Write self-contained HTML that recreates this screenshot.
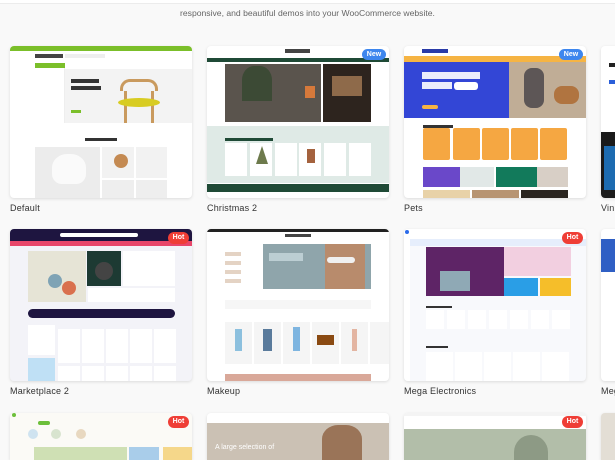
<!DOCTYPE html>
<html><head><meta charset="utf-8"><style>
*{margin:0;padding:0;box-sizing:border-box}
html,body{width:615px;height:460px;overflow:hidden}
body{background:#f9f9f9;font-family:"Liberation Sans",sans-serif;position:relative}
.top{position:absolute;left:0;top:0;width:615px;height:4px;background:#fff;border-bottom:1px solid #ececec}
.sub{position:absolute;top:8px;left:0;width:615px;text-align:center;font-size:8.6px;color:#666}
.card{position:absolute;width:182px;height:152px;background:#fff;border-radius:4px;overflow:hidden;box-shadow:0 1px 3px rgba(0,0,0,.12)}
.card.r3{height:47px;border-radius:4px 4px 0 0}
.card div{position:absolute}
.lbl{position:absolute;font-size:9px;color:#333;letter-spacing:.2px}
.new{right:3px;top:3px;width:24px;height:11px;border-radius:6px;background:#3d86ee;color:#fff;font-size:7px;text-align:center;line-height:11px;font-weight:bold}
.hot{right:3px;top:3px;width:21px;height:12px;border-radius:6px;background:#ef3e36;color:#fff;font-size:7px;text-align:center;line-height:12px;font-weight:bold}
</style></head><body>
<div class="top"></div>
<div class="sub">responsive, and beautiful demos into your WooCommerce website.</div>

<div class="card" style="left:10px;top:46px">
 <div style="left:0;top:0;width:182px;height:5px;background:#7bbf2a"></div>
 <div style="left:25px;top:8px;width:28px;height:4px;background:#444"></div>
 <div style="left:55px;top:8px;width:40px;height:4px;background:#eee"></div>
 <div style="left:25px;top:17px;width:30px;height:5px;background:#7bbf2a"></div>
 <div style="left:25px;top:22px;width:30px;height:55px;background:#fff;border-right:1px solid #eee"></div>
 <div style="left:55px;top:23px;width:127px;height:54px;background:#f3f3f3"></div>
 <div style="left:61px;top:33px;width:28px;height:4px;background:#333"></div>
 <div style="left:61px;top:40px;width:30px;height:4px;background:#333"></div>
 <div style="left:61px;top:64px;width:10px;height:3px;background:#7bbf2a"></div>
 <div style="left:110px;top:33px;width:38px;height:12px;border:3px solid #c99a5e;border-bottom:none;border-radius:10px 10px 0 0"></div>
 <div style="left:114px;top:45px;width:3px;height:32px;background:#c99a5e"></div>
 <div style="left:141px;top:45px;width:3px;height:32px;background:#c99a5e"></div>
 <div style="left:108px;top:52px;width:42px;height:9px;border-radius:50%;background:#d8cc22"></div>
 <div style="left:75px;top:92px;width:32px;height:3px;background:#333"></div>
 <div style="left:25px;top:101px;width:65px;height:51px;background:#ececec"></div>
 <div style="left:42px;top:108px;width:34px;height:30px;border-radius:45% 45% 10px 10px;background:#fafafa"></div>
 <div style="left:92px;top:101px;width:32px;height:31px;background:#f2f2f2"></div>
 <div style="left:104px;top:108px;width:14px;height:14px;border-radius:50%;background:#c48a52"></div>
 <div style="left:126px;top:101px;width:31px;height:31px;background:#f2f2f2"></div>
 <div style="left:92px;top:134px;width:32px;height:18px;background:#eee"></div>
 <div style="left:126px;top:134px;width:31px;height:18px;background:#eee"></div>
</div>
<div class="lbl" style="left:10px;top:203px">Default</div>

<div class="card" style="left:207px;top:46px">
 <div style="left:78px;top:3px;width:25px;height:4px;background:#444"></div>
 <div style="left:0;top:12px;width:182px;height:4px;background:#1f4a36"></div>
 <div style="left:18px;top:18px;width:96px;height:58px;background:#5a544d"></div>
 <div style="left:35px;top:20px;width:30px;height:35px;background:#3c4a35;border-radius:40% 40% 0 0"></div>
 <div style="left:98px;top:40px;width:10px;height:12px;background:#d6793b"></div>
 <div style="left:116px;top:18px;width:48px;height:58px;background:#2d241e"></div>
 <div style="left:125px;top:30px;width:30px;height:20px;background:#8e6a4a"></div>
 <div style="left:0;top:80px;width:182px;height:57px;background:#dfeae6"></div>
 <div style="left:18px;top:92px;width:48px;height:3px;background:#1f4a36"></div>
 <div style="left:18px;top:97px;width:22px;height:33px;background:#fff"></div>
 <div style="left:43px;top:97px;width:22px;height:33px;background:#fff"></div>
 <div style="left:68px;top:97px;width:22px;height:33px;background:#fff"></div>
 <div style="left:92px;top:97px;width:22px;height:33px;background:#fff"></div>
 <div style="left:117px;top:97px;width:22px;height:33px;background:#fff"></div>
 <div style="left:142px;top:97px;width:22px;height:33px;background:#fff"></div>
 <div style="left:49px;top:100px;width:12px;height:18px;background:#6d7a4c;clip-path:polygon(50% 0,100% 100%,0 100%)"></div>
 <div style="left:100px;top:103px;width:8px;height:14px;background:#a4623e"></div>
 <div style="left:0;top:138px;width:182px;height:8px;background:#1f4a36"></div>
 <div class="new">New</div>
</div>
<div class="lbl" style="left:207px;top:203px">Christmas 2</div>

<div class="card" style="left:404px;top:46px">
 <div style="left:18px;top:3px;width:26px;height:4px;background:#2a3ba8"></div>
 <div style="left:0;top:10px;width:182px;height:6px;background:#f6b443"></div>
 <div style="left:0;top:16px;width:105px;height:56px;background:#3346d6"></div>
 <div style="left:18px;top:26px;width:58px;height:7px;background:#fff;opacity:.9"></div>
 <div style="left:18px;top:36px;width:30px;height:7px;background:#fff;opacity:.9"></div>
 <div style="left:50px;top:36px;width:24px;height:8px;border-radius:3px;background:#fff"></div>
 <div style="left:18px;top:59px;width:16px;height:4px;border-radius:2px;background:#f6b443"></div>
 <div style="left:105px;top:16px;width:77px;height:56px;background:#c0ad96"></div>
 <div style="left:120px;top:22px;width:20px;height:40px;background:#5d5656;border-radius:8px"></div>
 <div style="left:150px;top:40px;width:25px;height:18px;background:#b07440;border-radius:8px"></div>
 <div style="left:19px;top:79px;width:30px;height:3px;background:#333"></div>
 <div style="left:19px;top:82px;width:27px;height:32px;background:#f5a742;border-radius:2px"></div>
 <div style="left:49px;top:82px;width:27px;height:32px;background:#f5a742;border-radius:2px"></div>
 <div style="left:78px;top:82px;width:27px;height:32px;background:#f5a742;border-radius:2px"></div>
 <div style="left:107px;top:82px;width:27px;height:32px;background:#f5a742;border-radius:2px"></div>
 <div style="left:136px;top:82px;width:27px;height:32px;background:#f5a742;border-radius:2px"></div>
 <div style="left:19px;top:121px;width:37px;height:20px;background:#6a48c9"></div>
 <div style="left:56px;top:121px;width:34px;height:20px;background:#e1e8e7"></div>
 <div style="left:92px;top:121px;width:41px;height:20px;background:#127a5b"></div>
 <div style="left:133px;top:121px;width:31px;height:20px;background:#d8cfc6"></div>
 <div style="left:19px;top:144px;width:47px;height:8px;background:#e8d2a8"></div>
 <div style="left:68px;top:144px;width:47px;height:8px;background:#b79472"></div>
 <div style="left:117px;top:144px;width:47px;height:8px;background:#2a2520"></div>
 <div class="new">New</div>
</div>
<div class="lbl" style="left:404px;top:203px">Pets</div>

<div class="card" style="left:601px;top:46px">
 <div style="left:8px;top:17px;width:10px;height:4px;background:#222"></div>
 <div style="left:8px;top:34px;width:10px;height:4px;background:#2b5fd9"></div>
 <div style="left:0;top:86px;width:182px;height:66px;background:#1a1a1a"></div>
 <div style="left:3px;top:100px;width:182px;height:44px;background:#1d6bb0"></div>
</div>
<div class="lbl" style="left:601px;top:203px">Vin</div>

<div class="card" style="left:10px;top:229px;background:#f3f3f8">
 <div style="left:0;top:0;width:182px;height:12px;background:#1e1540"></div>
 <div style="left:50px;top:4px;width:78px;height:4px;background:#fff;border-radius:2px"></div>
 <div style="left:0;top:12px;width:182px;height:5px;background:#e8466a"></div>
 <div style="left:18px;top:22px;width:58px;height:51px;background:#e6e4d6"></div>
 <div style="left:38px;top:45px;width:14px;height:14px;border-radius:50%;background:#7fa3b5"></div>
 <div style="left:52px;top:52px;width:14px;height:14px;border-radius:50%;background:#d9704e"></div>
 <div style="left:77px;top:22px;width:34px;height:35px;background:#1d3a33"></div>
 <div style="left:85px;top:33px;width:18px;height:18px;border-radius:50%;background:#444"></div>
 <div style="left:113px;top:22px;width:52px;height:35px;background:#fff"></div>
 <div style="left:78px;top:59px;width:87px;height:14px;background:#fff"></div>
 <div style="left:18px;top:80px;width:147px;height:9px;background:#1e1540;border-radius:5px"></div>
 <div style="left:18px;top:96px;width:27px;height:30px;background:#fff"></div>
 <div style="left:18px;top:129px;width:27px;height:23px;background:#bfe0f5"></div>
 <div style="left:48px;top:100px;width:22px;height:34px;background:#fff"></div>
 <div style="left:72px;top:100px;width:22px;height:34px;background:#fff"></div>
 <div style="left:96px;top:100px;width:22px;height:34px;background:#fff"></div>
 <div style="left:120px;top:100px;width:22px;height:34px;background:#fff"></div>
 <div style="left:144px;top:100px;width:22px;height:34px;background:#fff"></div>
 <div style="left:48px;top:137px;width:22px;height:15px;background:#fff"></div>
 <div style="left:72px;top:137px;width:22px;height:15px;background:#fff"></div>
 <div style="left:96px;top:137px;width:22px;height:15px;background:#fff"></div>
 <div style="left:120px;top:137px;width:22px;height:15px;background:#fff"></div>
 <div style="left:144px;top:137px;width:22px;height:15px;background:#fff"></div>
 <div class="hot">Hot</div>
</div>
<div class="lbl" style="left:10px;top:386px">Marketplace 2</div>

<div class="card" style="left:207px;top:229px">
 <div style="left:0;top:0;width:182px;height:3px;background:#222"></div>
 <div style="left:78px;top:5px;width:26px;height:3px;background:#444"></div>
 <div style="left:18px;top:18px;width:16px;height:40px;background:repeating-linear-gradient(#fff 0 5px,#e4d3c4 5px 9px)"></div>
 <div style="left:56px;top:15px;width:108px;height:45px;background:#8fa5ab"></div>
 <div style="left:118px;top:15px;width:40px;height:45px;background:#b88b6c"></div>
 <div style="left:120px;top:28px;width:28px;height:6px;background:#f0f0f0;border-radius:3px"></div>
 <div style="left:62px;top:24px;width:34px;height:8px;background:#cfe0e4;opacity:.7"></div>
 <div style="left:18px;top:71px;width:146px;height:9px;background:#f6f6f6"></div>
 <div style="left:18px;top:93px;width:27px;height:42px;background:#f5f5f5"></div>
 <div style="left:47px;top:93px;width:27px;height:42px;background:#f5f5f5"></div>
 <div style="left:76px;top:93px;width:27px;height:42px;background:#f5f5f5"></div>
 <div style="left:105px;top:93px;width:27px;height:42px;background:#f5f5f5"></div>
 <div style="left:134px;top:93px;width:27px;height:42px;background:#f5f5f5"></div>
 <div style="left:163px;top:93px;width:19px;height:42px;background:#f5f5f5"></div>
 <div style="left:28px;top:100px;width:7px;height:22px;background:#8cc0de"></div>
 <div style="left:56px;top:100px;width:9px;height:22px;background:#5a7b9c"></div>
 <div style="left:86px;top:98px;width:7px;height:24px;background:#7eb5e0"></div>
 <div style="left:110px;top:106px;width:17px;height:10px;background:#8a4a12"></div>
 <div style="left:145px;top:100px;width:5px;height:22px;background:#e3b5a2"></div>
 <div style="left:18px;top:145px;width:146px;height:7px;background:#d9a899"></div>
</div>
<div class="lbl" style="left:207px;top:386px">Makeup</div>

<div class="card" style="left:404px;top:229px;background:#f8f9fc">
 <div style="left:0;top:0;width:182px;height:10px;background:#fff"></div>
 <div style="left:0;top:0;width:6px;height:152px;background:#fff"></div>
 <div style="left:1px;top:1px;width:4px;height:4px;border-radius:50%;background:#2b6bea"></div>
 <div style="left:6px;top:10px;width:176px;height:7px;background:#e6eefc"></div>
 <div style="left:22px;top:18px;width:78px;height:49px;background:#5e2466"></div>
 <div style="left:36px;top:42px;width:30px;height:20px;background:#8fa9b5"></div>
 <div style="left:100px;top:18px;width:67px;height:29px;background:#f2cfe0"></div>
 <div style="left:100px;top:49px;width:34px;height:18px;background:#2a9ee6"></div>
 <div style="left:136px;top:49px;width:31px;height:18px;background:#f5be2a"></div>
 <div style="left:22px;top:77px;width:26px;height:2px;background:#333"></div>
 <div style="left:22px;top:81px;width:18px;height:19px;background:#fff"></div>
 <div style="left:43px;top:81px;width:18px;height:19px;background:#fff"></div>
 <div style="left:64px;top:81px;width:18px;height:19px;background:#fff"></div>
 <div style="left:85px;top:81px;width:18px;height:19px;background:#fff"></div>
 <div style="left:106px;top:81px;width:18px;height:19px;background:#fff"></div>
 <div style="left:127px;top:81px;width:18px;height:19px;background:#fff"></div>
 <div style="left:148px;top:81px;width:18px;height:19px;background:#fff"></div>
 <div style="left:22px;top:117px;width:22px;height:2px;background:#333"></div>
 <div style="left:22px;top:123px;width:27px;height:29px;background:#fff"></div>
 <div style="left:51px;top:123px;width:27px;height:29px;background:#fff"></div>
 <div style="left:80px;top:123px;width:27px;height:29px;background:#fff"></div>
 <div style="left:109px;top:123px;width:27px;height:29px;background:#fff"></div>
 <div style="left:138px;top:123px;width:27px;height:29px;background:#fff"></div>
 <div class="hot">Hot</div>
</div>
<div class="lbl" style="left:404px;top:386px">Mega Electronics</div>

<div class="card" style="left:601px;top:229px">
 <div style="left:0;top:10px;width:182px;height:33px;background:#2f5fc4"></div>
</div>
<div class="lbl" style="left:601px;top:386px">Meg</div>

<div class="card r3" style="left:10px;top:413px;background:#fbfaf6">
 <div style="left:2px;top:0;width:4px;height:4px;border-radius:50%;background:#6cbf3a"></div>
 <div style="left:28px;top:8px;width:12px;height:4px;border-radius:2px;background:#6cbf3a"></div>
 <div style="left:18px;top:16px;width:10px;height:10px;border-radius:50%;background:#cfe3f0"></div>
 <div style="left:41px;top:16px;width:10px;height:10px;border-radius:50%;background:#d8e4cf"></div>
 <div style="left:66px;top:16px;width:10px;height:10px;border-radius:50%;background:#e8d8c0"></div>
 <div style="left:24px;top:34px;width:93px;height:13px;background:#cfe0b4"></div>
 <div style="left:119px;top:34px;width:30px;height:13px;background:#a9cdea"></div>
 <div style="left:153px;top:34px;width:29px;height:13px;background:#f5d78a"></div>
 <div class="hot">Hot</div>
</div>
<div class="card r3" style="left:207px;top:413px">
 <div style="left:0;top:10px;width:182px;height:37px;background:#cbc1b4"></div>
 <div style="left:115px;top:12px;width:40px;height:35px;background:#9a7458;border-radius:40% 40% 0 0"></div>
 <div style="left:8px;top:31px;font-size:7px;color:#fff">A large selection of</div>
</div>
<div class="card r3" style="left:404px;top:413px">
 <div style="left:0;top:0;width:182px;height:3px;background:#f4f4f4"></div>
 <div style="left:0;top:16px;width:182px;height:31px;background:#b2bea9"></div>
 <div style="left:110px;top:22px;width:34px;height:25px;border-radius:17px 17px 0 0;background:#8d9a85"></div>
 <div class="hot">Hot</div>
</div>
<div class="card r3" style="left:601px;top:413px;background:#e3ded5"></div>
</body></html>
